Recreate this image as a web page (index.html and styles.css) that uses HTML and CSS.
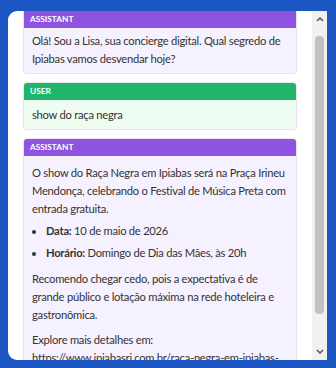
FILE: index.html
```html
<!DOCTYPE html>
<html lang="pt">
<head>
  <meta charset="UTF-8">
  <title>Concierge Ipiabas</title>
  <link rel="stylesheet" href="styles.css">
</head>
<body>

<div class="panel">
  <div class="chat">
    <div class="msg assistant">
      <div class="msg-head">ASSISTANT</div>
      <div class="msg-body">
        <p>Olá! Sou a Lisa, sua concierge digital. Qual segredo de Ipiabas vamos desvendar hoje?</p>
      </div>
    </div>

    <div class="msg user">
      <div class="msg-head">USER</div>
      <div class="msg-body">
        <p>show do raça negra</p>
      </div>
    </div>

    <div class="msg assistant">
      <div class="msg-head">ASSISTANT</div>
      <div class="msg-body long">
        <p>O show do Raça Negra em Ipiabas será na Praça Irineu Mendonça, celebrando o Festival de Música Preta com entrada gratuita.</p>
        <ul>
          <li><b>Data:</b> 10 de maio de 2026</li>
          <li><b>Horário:</b> Domingo de Dia das Mães, às 20h</li>
        </ul>
        <p>Recomendo chegar cedo, pois a expectativa é de grande público e lotação máxima na rede hoteleira e gastronômica.</p>
        <p>Explore mais detalhes em:<br><a href="#">https://www.ipiabasrj.com.br/raca-negra-em-ipiabas-rede-hoteleira</a></p>
      </div>
    </div>
  </div>
  <div class="scrollbar">
    <div class="sb-btn">
      <svg width="8" height="5" viewBox="0 0 8 5"><path d="M1 4 L4 1 L7 4" fill="none" stroke="#555" stroke-width="1.5"/></svg>
    </div>
    <div class="sb-track"><div class="sb-thumb"></div></div>
    <div class="sb-btn">
      <svg width="8" height="5" viewBox="0 0 8 5"><path d="M1 1 L4 4 L7 1" fill="none" stroke="#555" stroke-width="1.5"/></svg>
    </div>
  </div>
</div>

</body>
</html>
```

FILE: styles.css
```css
body {
  margin: 0;
  background: #1b56c2;
  font-family: Lato, sans-serif;
  color: #333;
}
.panel {
  margin: 11px 9px 0 8px;
  height: 349px;
  background: #fff;
  border-radius: 9px 0 0 9px;
  display: flex;
  overflow: hidden;
}
.chat {
  flex: 1;
  overflow: hidden;
  padding: 0 15px;
}
.msg {
  border: 1px solid #e8e4ee;
  border-radius: 4px;
  margin-bottom: 8px;
  overflow: hidden;
}
.chat > .msg:first-child {
  border-top: none;
  border-radius: 0 0 4px 4px;
}
.msg-head {
  color: #fff;
  font-size: 8.3px;
  font-weight: bold;
  padding: 0 6px;
  height: 17px;
  line-height: 17px;
}
.msg-body {
  padding: 4px 7px 5px 8px;
  font-size: 11.2px;
  letter-spacing: -0.25px;
  line-height: 18px;
}
.user .msg-body { padding: 6px 7px 5px 8px; }
.msg-body.long { padding-top: 8px; }
.msg-body p { margin: 0 0 7px; }
.msg-body p:first-child { margin-bottom: 4px; }
.msg-body p:last-child { margin-bottom: 0; }
.msg-body ul { margin: 0 0 8px; padding-left: 14px; }
.msg-body li { margin-bottom: 4px; }
.msg-body a { color: #333; }
.assistant .msg-head { background: #8e54df; }
.assistant .msg-body { background: #f6f1fe; }
.user .msg-head { background: #21b56c; }
.user .msg-body { background: #effcf2; }
.scrollbar {
  width: 15px;
  background: #f1f1f1;
  display: flex;
  flex-direction: column;
}
.sb-btn {
  height: 17px;
  display: flex;
  align-items: center;
  justify-content: center;
}
.sb-track {
  flex: 1;
  padding: 0 3px;
}
.sb-thumb {
  margin-top: 8px;
  height: 278px;
  background: #c1c1c1;
  border-radius: 4px;
}
```
